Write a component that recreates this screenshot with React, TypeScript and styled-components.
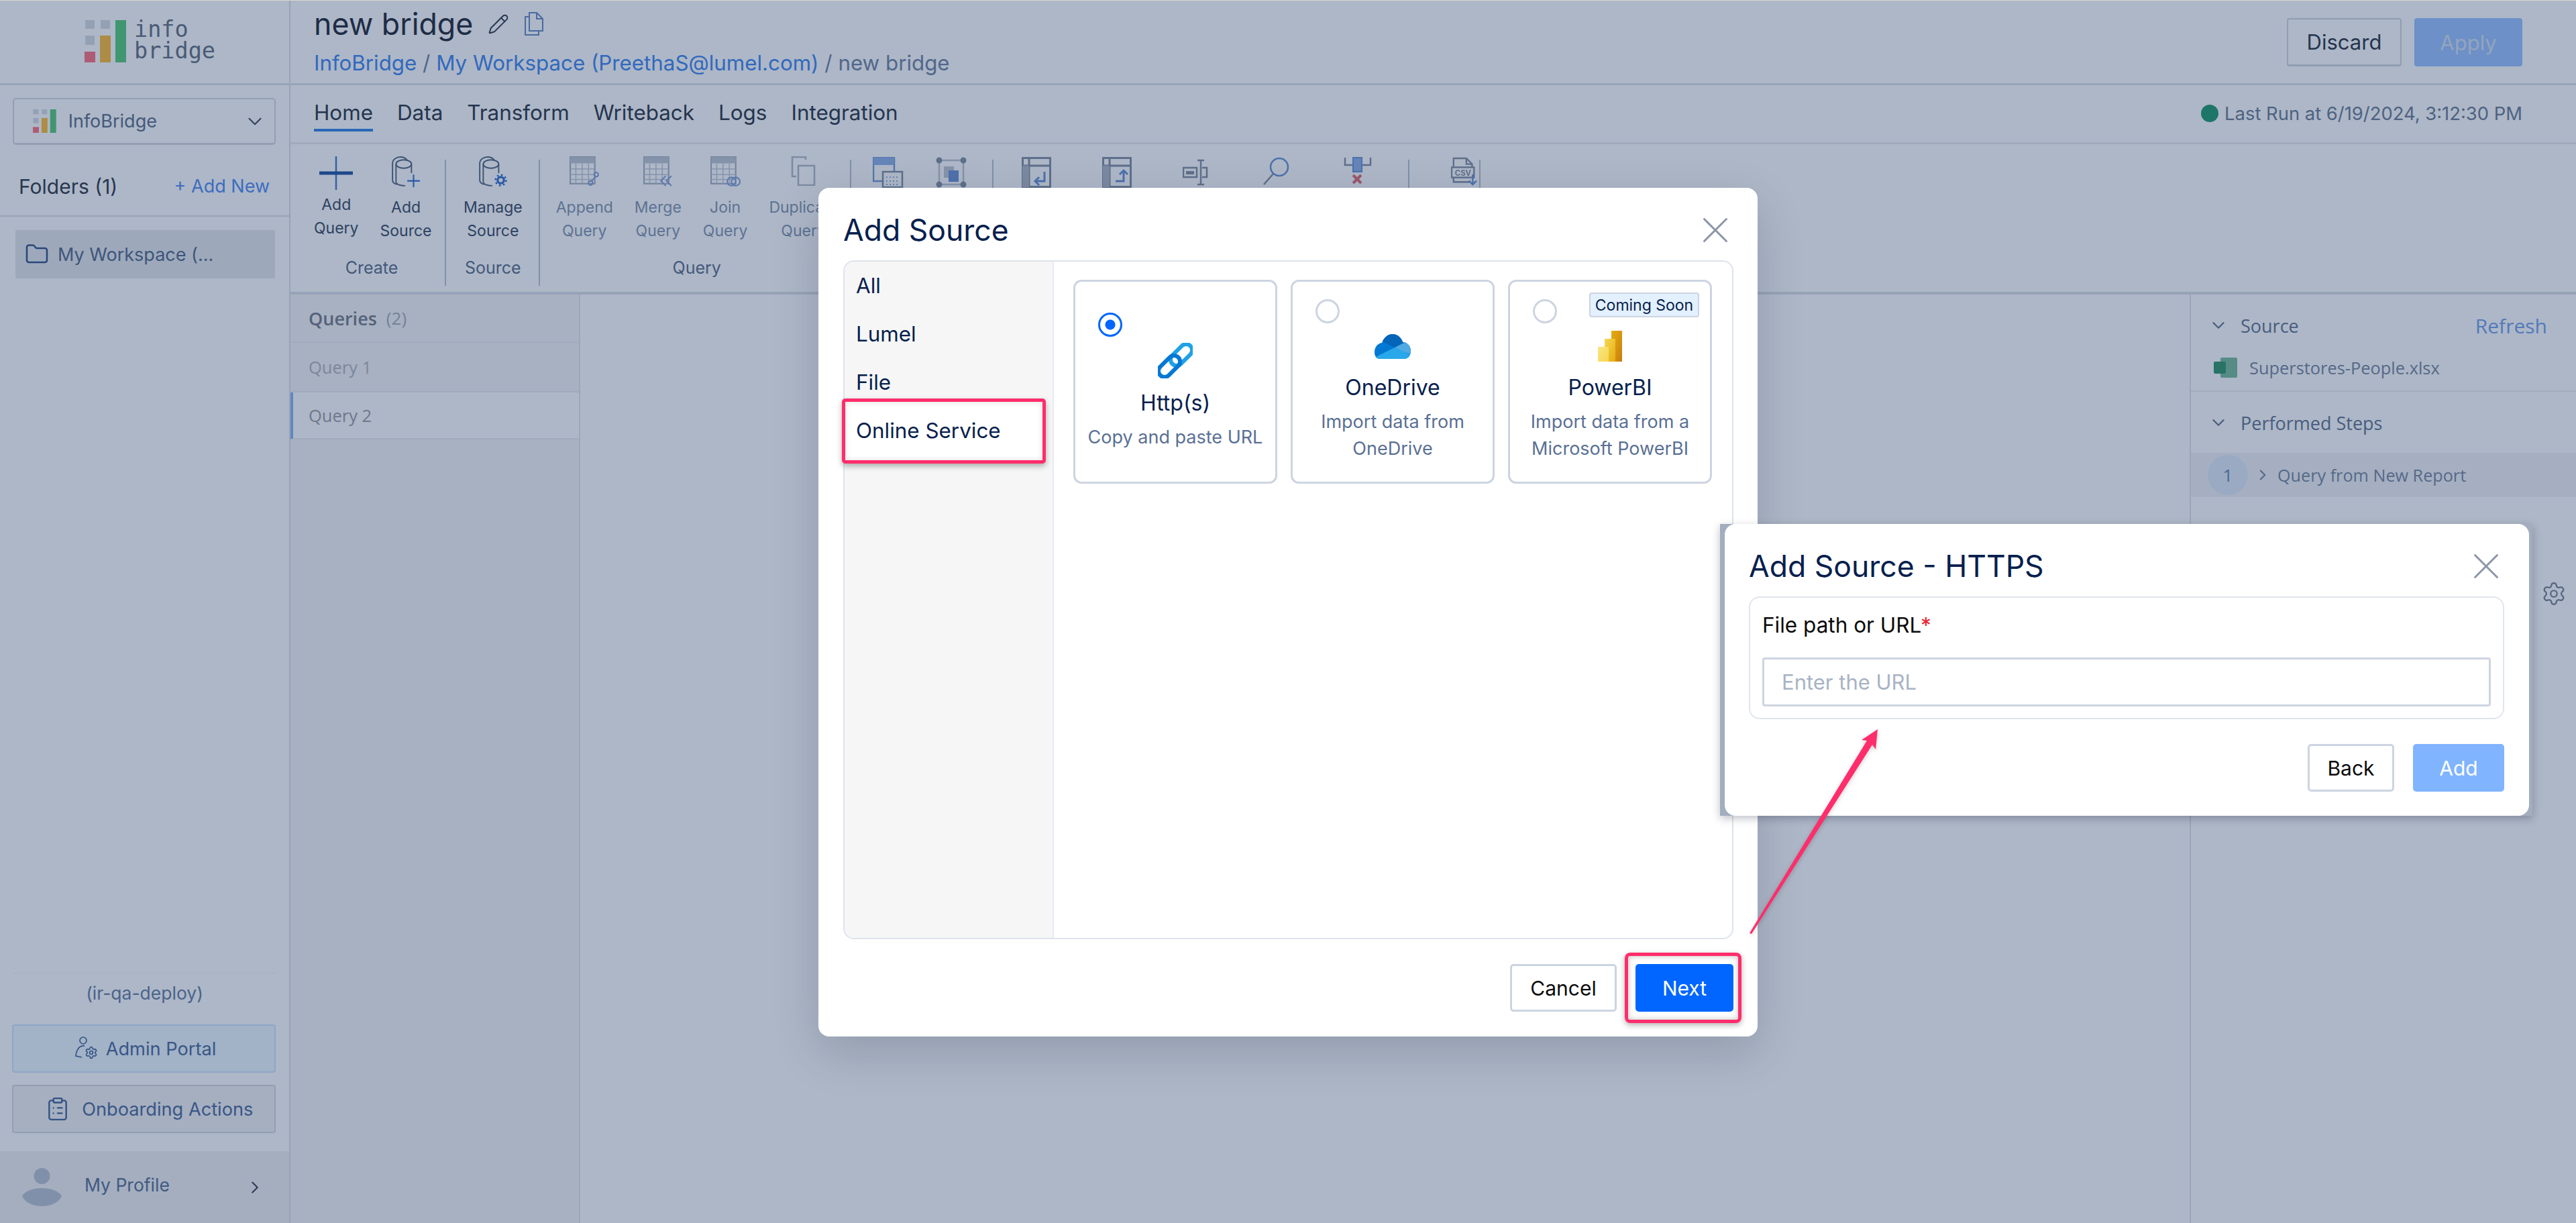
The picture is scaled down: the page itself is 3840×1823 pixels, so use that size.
import React from "react";
import styled, { createGlobalStyle } from "styled-components";
import { ChevronDown, ChevronRight, ClipboardList, Folder, Pencil, Settings, X } from "lucide-react";

const Global = createGlobalStyle`
  html, body { margin: 0; padding: 0; background: #fff; }
  body { font-family: Inter, "Liberation Sans", sans-serif; overflow: hidden; }
  * { box-sizing: border-box; }
`;

const Page = styled.div`
  position: relative;
  width: 3840px;
  height: 1823px;
  overflow: hidden;
  display: grid;
  grid-template-columns: 433px 1fr;
  background: #fff;
`;

/* ---------- sidebar ---------- */
const Sidebar = styled.aside`
  display: flex;
  flex-direction: column;
  border-right: 2px solid #dfe2e7;
  height: 1823px;
`;
const LogoRow = styled.div`
  height: 127px;
  border-bottom: 3px solid #dfe2e7;
  display: flex;
  align-items: flex-start;
  padding: 30px 0 0 126px;
  gap: 12px;
`;
const LogoText = styled.div`
  font-family: "DejaVu Sans Mono", monospace;
  font-size: 33.5px;
  line-height: 32px;
  color: #6d7686;
  margin-top: -2px;
`;
const SelectBox = styled.div`
  margin: 19px 20px 0 19px;
  height: 70px;
  border: 2px solid #d8dce4;
  border-bottom-width: 3px;
  border-radius: 5px;
  display: flex;
  align-items: center;
  padding: 0 12px 0 28px;
  gap: 18px;
  color: #66758f;
  font-size: 27px;
  svg:last-child { margin-left: auto; color: #4b5568; }
`;
const FolderHead = styled.div`
  height: 107px;
  border-bottom: 2px solid #dfe2e7;
  display: flex;
  align-items: center;
  justify-content: space-between;
  padding: 18px 29px 0 28px;
`;
const FolderTitle = styled.span`
  font-size: 30px;
  color: #3b4350;
`;
const AddNew = styled.span`
  font-size: 27px;
  color: #5a93f4;
`;
const FolderItem = styled.div`
  margin: 20px 21px 0 23px;
  height: 72px;
  background: #e8eaee;
  display: flex;
  align-items: center;
  padding-left: 14px;
  gap: 13px;
  font-size: 27px;
  color: #5d6f8f;
  svg { color: #3f5a8c; }
`;
const SideFill = styled.div`
  flex: 1;
`;
const Tenant = styled.div`
  border-top: 1px solid #f3f4f6;
  margin: 0 18px;
  text-align: center;
  font-size: 26.5px;
  height: 77px;
  line-height: 58px;
  color: #6f83a6;
`;
const SideButton = styled.div<{ $tone: "blue" | "grey" }>`
  margin: 0 20px 18px 18px;
  height: 72px;
  border-radius: 4px;
  border: 2px solid ${p => (p.$tone === "blue" ? "#d1e6ff" : "#d8dae0")};
  background: ${p => (p.$tone === "blue" ? "#eff8ff" : "#f4f3f5")};
  display: flex;
  align-items: center;
  justify-content: center;
  gap: 10px;
  padding-left: ${p => (p.$tone === "blue" ? 5 : 15)}px;
  font-size: 27.2px;
  color: #54719f;
  svg { color: #4a6a9c; }
`;
const ProfileRow = styled.div`
  margin-top: 9px;
  height: 107px;
  background: #f3f2f2;
  display: flex;
  align-items: center;
  padding: 0 36px 0 33px;
  font-size: 26.5px;
  color: #5f769b;
  gap: 34px;
  span { margin-top: -8px; }
  svg:last-child { margin-left: auto; color: #3d4656; }
`;

/* ---------- top ---------- */
const Main = styled.main`
  display: flex;
  flex-direction: column;
  min-width: 0;
  height: 1823px;
`;
const TopBar = styled.header`
  height: 127px;
  border-bottom: 3px solid #dfe2e7;
  display: flex;
  align-items: flex-start;
  justify-content: space-between;
  padding: 0 80px 0 35px;
`;
const TitleRow = styled.div`
  display: flex;
  align-items: center;
  gap: 22px;
  height: 72px;
  color: #3d4350;
`;
const Title = styled.h1`
  margin: 0;
  font-weight: 400;
  font-size: 44.7px;
  color: #2e3340;
`;
const Crumb = styled.div`
  font-size: 31.3px;
  line-height: 44px;
  margin-top: 0;
  color: #7a8aa6;
`;
const CrumbLink = styled.span`
  color: #4a8cf0;
`;
const TopActions = styled.div`
  display: flex;
  gap: 19px;
  padding-top: 27px;
`;
const Ghost = styled.div`
  width: 171px;
  height: 72px;
  border: 2px solid #d5d9e0;
  border-bottom-width: 3px;
  border-radius: 4px;
  display: flex;
  align-items: center;
  justify-content: center;
  font-size: 31px;
  color: #37404d;
`;
const Primary = styled.div`
  width: 161px;
  height: 72px;
  background: #9fc6ff;
  border-radius: 4px;
  display: flex;
  align-items: center;
  justify-content: center;
  font-size: 31px;
  color: #dbe4f2;
`;
const TabsRow = styled.nav`
  height: 88px;
  border-bottom: 3px solid #eceef1;
  display: flex;
  align-items: stretch;
  padding-left: 35px;
  gap: 36px;
`;
const Tab = styled.div<{ $on?: boolean }>`
  font-size: 31.4px;
  color: #37404d;
  height: 69px;
  line-height: 46px;
  padding-top: 18px;
  border-bottom: ${p => (p.$on ? "4px solid #3d8ae8" : "4px solid transparent")};
`;
const RunInfo = styled.div`
  margin-left: auto;
  margin-right: 80px;
  display: flex;
  align-items: center;
  gap: 9px;
  font-size: 27.4px;
  height: 84px;
  color: #748299;
`;
const Dot = styled.i`
  width: 26px;
  height: 26px;
  border-radius: 50%;
  background: #2c9f74;
`;

/* ---------- ribbon ---------- */
const Ribbon = styled.section`
  height: 224px;
  border-bottom: 4px solid #dfe2e7;
  display: flex;
  align-items: stretch;
`;
const RGroup = styled.div<{ $pad: number; $gap: number; $end?: number; $w?: number }>`
  position: relative;
  display: flex;
  flex-direction: column;
  ${p => (p.$w ? `width: ${p.$w}px;` : "")}
  padding: 15px ${p => p.$end ?? 0}px 0 ${p => p.$pad}px;
  &::after {
    content: "";
    position: absolute;
    right: 0;
    top: 23px;
    bottom: 9px;
    width: 2px;
    background: #bfc6d2;
  }
  > div:first-child { gap: ${p => p.$gap}px; }
`;
const RItems = styled.div`
  display: flex;
  flex: 1;
`;
const RButton = styled.div<{ $off?: boolean }>`
  display: flex;
  flex-direction: column;
  align-items: center;
  font-size: 23px;
  line-height: 35px;
  text-align: center;
  color: ${p => (p.$off ? "#8b9ab3" : "#45526a")};
`;
const RIcon = styled.div<{ $h: number }>`
  height: ${p => p.$h}px;
  padding-top: 3px;
  display: flex;
  align-items: flex-start;
  justify-content: center;
`;
const RLabel = styled.div`
  font-size: 25px;
  line-height: 36px;
  padding-bottom: 18px;
  text-align: center;
  color: #65748e;
`;
const IconCell = styled.div`
  width: 44px;
  padding-top: 4px;
  opacity: 0.8;
`;

/* ---------- workspace ---------- */
const Workspace = styled.div`
  flex: 1;
  display: flex;
  min-height: 0;
`;
const Queries = styled.div`
  width: 432px;
  border-right: 2px solid #e6e8ec;
  background: #f6f6f7;
  font-family: "Open Sans", Inter, sans-serif;
`;
const QHead = styled.div`
  height: 72px;
  border-bottom: 2px solid #ecedf0;
  display: flex;
  align-items: center;
  gap: 14px;
  padding-left: 27px;
  font-size: 27px;
  font-weight: 600;
  color: #7e828c;
  span { font-weight: 400; font-size: 26px; color: #aeb1b8; }
`;
const QRow = styled.div<{ $on?: boolean; $h: number }>`
  height: ${p => p.$h}px;
  border-bottom: 2px solid #ecedf0;
  display: flex;
  align-items: center;
  padding-left: ${p => (p.$on ? 23 : 27)}px;
  font-size: 25.5px;
  color: ${p => (p.$on ? "#a2a2a8" : "#b8b8be")};
  border-left: ${p => (p.$on ? "4px solid #8fb8f5" : "0")};
  background: ${p => (p.$on ? "#fff" : "transparent")};
`;
const Canvas = styled.div`
  flex: 1;
`;
const Side = styled.div`
  width: 576px;
  border-left: 2px solid #e3e5ea;
  font-size: 26px;
  color: #6b7a94;
  position: relative;
  font-family: "Open Sans", Inter, sans-serif;
`;
const SideHead = styled.div`
  height: 82px;
  display: flex;
  align-items: center;
  padding: 10px 43px 0 26px;
  gap: 18px;
  font-size: 27px;
  font-weight: 500;
  b { font-weight: 400; margin-left: auto; color: #7aa5ec; font-size: 30px; }
`;
const SideFile = styled.div`
  height: 63px;
  display: flex;
  align-items: center;
  gap: 17px;
  padding: 0 0 7px 34px;
  border-bottom: 2px solid #eceef1;
  font-size: 25.4px;
  color: #7f8ca3;
`;
const StepRow = styled.div`
  height: 66px;
  margin-top: 9px;
  background: #f3f4f6;
  display: flex;
  align-items: center;
  padding-left: 25px;
  gap: 9px;
  font-size: 25.2px;
  color: #7f8ca3;
`;
const StepNo = styled.span`
  width: 60px;
  height: 60px;
  border-radius: 50%;
  background: #e3ecfa;
  display: flex;
  align-items: center;
  justify-content: center;
  color: #6d86ad;
`;
const GearSpot = styled.div`
  position: absolute;
  right: 14px;
  top: 427px;
  color: #7c879a;
`;

/* ---------- overlay ---------- */
const Scrim = styled.div`
  position: absolute;
  inset: 0;
  background: rgba(0, 30, 80, 0.32);
`;
const TopHair = styled.div`
  position: absolute;
  inset: 0 0 auto 0;
  height: 1px;
  background: #d8d8d2;
`;
const Dialog = styled.div`
  position: absolute;
  left: 1220px;
  top: 280px;
  width: 1400px;
  height: 1265px;
  background: #fff;
  border-radius: 16px;
  box-shadow: 0 24px 70px rgba(0, 10, 40, 0.16);
  display: flex;
  flex-direction: column;
  padding: 0 36px 0 37px;
`;
const DialogHead = styled.div`
  height: 108px;
  display: flex;
  align-items: center;
  justify-content: space-between;
  padding: 18px 0 0 0;
  svg { color: #8d97a8; margin-right: -6px; }
`;
const DialogTitle = styled.h2`
  margin: 0;
  font-weight: 400;
  font-size: 44.5px;
  color: #06204d;
`;
const Frame = styled.div`
  height: 1012px;
  border: 2px solid #dde3ec;
  border-radius: 16px;
  display: flex;
  overflow: visible;
`;
const Nav = styled.div`
  width: 312px;
  background: #f6f6f6;
  border-right: 2px solid #e6eaf0;
  border-radius: 14px 0 0 14px;
`;
const NavItem = styled.div<{ $mark?: boolean }>`
  position: relative;
  height: 72px;
  display: flex;
  align-items: center;
  padding-left: 17px;
  font-size: 31.4px;
  color: #06204d;
  span { position: relative; z-index: 1; }
  ${p =>
    p.$mark &&
    `&::before {
      content: "";
      position: absolute;
      left: -4px; right: 10px; top: -12px; bottom: -13px;
      background: #fff;
      border: 5px solid #ff2d6b;
      border-radius: 5px;
      box-shadow: 0 4px 8px rgba(0,0,0,.3), inset 0 0 10px rgba(0,0,0,.12);
    }`}
`;
const Cards = styled.div`
  flex: 1;
  display: flex;
  gap: 20px;
  padding: 27px 0 0 29px;
  align-items: flex-start;
`;
const Card = styled.div<{ $top: number }>`
  position: relative;
  width: 304px;
  height: 304px;
  border: 3px solid #cdd4e1;
  border-radius: 12px;
  display: flex;
  flex-direction: column;
  align-items: center;
  padding-top: ${p => p.$top}px;
`;
const Radio = styled.i<{ $on?: boolean; $y: number; $x: number }>`
  position: absolute;
  left: ${p => p.$x}px;
  top: ${p => p.$y}px;
  width: 36px;
  height: 36px;
  border-radius: 50%;
  border: 3px solid ${p => (p.$on ? "#0066ff" : "#cdd4e1")};
  background: ${p => (p.$on ? "radial-gradient(circle, #0066ff 0 7px, #fff 8px)" : "#fff")};
`;
const Badge = styled.span`
  position: absolute;
  right: 16px;
  top: 16px;
  width: 164px;
  height: 37px;
  border: 2px solid #cdd4e1;
  border-radius: 4px;
  background: #e3f0ff;
  display: flex;
  align-items: center;
  justify-content: center;
  font-size: 23px;
  color: #06204d;
`;
const CardIcon = styled.div<{ $h: number }>`
  height: ${p => p.$h}px;
  display: flex;
  align-items: center;
  justify-content: center;
`;
const CardTitle = styled.div`
  margin-top: 16px;
  font-size: 32px;
  line-height: 42px;
  color: #06204d;
`;
const CardText = styled.div`
  margin-top: 10px;
  font-size: 27px;
  line-height: 40px;
  text-align: center;
  color: #5a7094;
`;
const Footer = styled.div`
  display: flex;
  justify-content: flex-end;
  gap: 28px;
  padding-top: 37px;
`;
const Outline = styled.div<{ $w: number }>`
  width: ${p => p.$w}px;
  height: 71px;
  border: 3px solid #cdd4e1;
  border-radius: 5px;
  display: flex;
  align-items: center;
  justify-content: center;
  font-size: 30px;
  color: #0b0b0b;
`;
const Filled = styled.div<{ $w: number; $bg: string }>`
  position: relative;
  width: ${p => p.$w}px;
  height: 71px;
  background: ${p => p.$bg};
  border-radius: 5px;
  display: flex;
  align-items: center;
  justify-content: center;
  font-size: 30px;
  color: #fff;
`;
const Mark = styled.i`
  position: absolute;
  inset: -17px -12px -17px -16px;
  border: 5px solid #ff2d6b;
  border-radius: 8px;
  box-shadow: 0 3px 8px rgba(0, 0, 0, 0.3), inset 0 0 8px rgba(0, 0, 0, 0.25);
`;

const Snap = styled.div`
  position: absolute;
  left: 2564px;
  top: 781px;
  width: 1211px;
  height: 435px;
  background: #a3adbe;
  box-shadow: 0 4px 12px rgba(0, 10, 40, 0.25);
  padding-left: 7px;
  padding-right: 5px;
`;
const SnapBody = styled.div`
  height: 100%;
  background: #fff;
  border-radius: 16px;
  padding: 0 37px 0 36px;
  display: flex;
  flex-direction: column;
`;
const SnapFrame = styled.div`
  height: 183px;
  border: 2px solid #e0e5ee;
  border-radius: 16px;
  padding: 0 18px;
`;
const FieldLabel = styled.label`
  display: block;
  height: 89px;
  line-height: 82px;
  font-size: 31.5px;
  color: #0b0b0b;
  em { color: #e8202a; font-style: normal; }
`;
const UrlInput = styled.input`
  display: block;
  width: 100%;
  height: 73px;
  border: 3px solid #cdd4e1;
  border-radius: 4px;
  padding: 0 26px;
  font-family: inherit;
  font-size: 31px;
  background: #fff;
  &::placeholder { color: #a8b3c4; }
`;
const Arrow = styled.svg`
  position: absolute;
  left: 2600px;
  top: 1080px;
  filter: drop-shadow(0 2px 3px rgba(0, 0, 0, 0.2));
`;

/* ---------- drawings ---------- */
const Bars = ({ s }: { s: number }) => (
  <svg width={62 * s} height={63 * s} viewBox="0 0 62 63">
    <rect x="1" y="0" width="14" height="13" fill="#dadde3" />
    <rect x="24" y="0" width="14" height="13" fill="#dadde3" />
    <rect x="1" y="23" width="14" height="14" fill="#dadde3" />
    <rect x="0" y="47" width="16" height="16" fill="#ff7a85" />
    <rect x="23" y="23" width="16" height="40" fill="#ffc040" />
    <rect x="46" y="0" width="16" height="63" fill="#5fcf80" />
  </svg>
);
const Cylinders = ({ children }: { children: React.ReactNode }) => (
  <svg width="46" height="46" viewBox="0 0 42 44" fill="none" stroke="#5a6a84" strokeWidth="1.8">
    <path d="M2 34V10C2 4 8 1 13 1C17 1 21 2 23 6M2 34C2 37 4 39 8 40" />
    <ellipse cx="18" cy="11" rx="11" ry="6" />
    <path d="M7 11V36C7 40 13 42 20 42M29 11V24" />
    {children}
  </svg>
);
const AddSourceIcon = () => (
  <Cylinders><path d="M32 26V44M23 35H41" stroke="#3f74d0" strokeWidth="2" /></Cylinders>
);
const ManageIcon = () => (
  <Cylinders>
    <circle cx="32" cy="34" r="4.5" stroke="#3f74d0" strokeWidth="3" />
    <circle cx="32" cy="34" r="7.5" stroke="#3f74d0" strokeWidth="2.5" strokeDasharray="2.5 3.4" />
  </Cylinders>
);
const TableIcon = ({ mark }: { mark: React.ReactNode }) => (
  <svg width="46" height="46" viewBox="0 0 42 44">
    <rect x="1" y="1" width="35" height="38" fill="none" stroke="#a8b1c2" strokeWidth="2" />
    <rect x="1" y="1" width="35" height="9" fill="#c3c9d5" />
    <path d="M1 18h35M1 26h35M1 33h35M9 10v29M18 10v29M27 10v29" stroke="#c6ccd7" strokeWidth="1.5" />
    {mark}
  </svg>
);
const DupIcon = () => (
  <svg width="38" height="44" viewBox="0 0 38 44" fill="none" stroke="#b6bdca" strokeWidth="2.5">
    <path d="M22 5V1H2v29h6" />
    <rect x="11" y="14" width="24" height="29" />
  </svg>
);
const PlusIcon = () => (
  <svg width="50" height="50" viewBox="0 0 50 50">
    <path d="M25 0v50" stroke="#4f7fd0" strokeWidth="2.5" />
    <path d="M0 25h50" stroke="#2b5ea8" strokeWidth="5" />
  </svg>
);
const Swap = () => (
  <svg width="46" height="46" viewBox="0 0 46 46" fill="none">
    <rect x="1" y="1" width="31" height="35" stroke="#5c86cc" strokeWidth="2.5" />
    <rect x="1" y="1" width="31" height="11" fill="#7da4e6" />
    <rect x="15" y="22" width="29" height="23" fill="#fff" stroke="#6f7c92" strokeWidth="2.5" />
    <path d="M20 30h20M20 36h20M20 41h20" stroke="#7da4e6" strokeWidth="2" strokeDasharray="2 3" />
  </svg>
);
const Crop = () => (
  <svg width="46" height="46" viewBox="0 0 46 46">
    <rect x="5" y="5" width="36" height="36" fill="none" stroke="#b6bdca" strokeWidth="2.5" />
    <circle cx="5" cy="5" r="4.5" fill="#6f7c92" />
    <circle cx="41" cy="5" r="4.5" fill="#6f7c92" />
    <circle cx="5" cy="41" r="4.5" fill="#6f7c92" />
    <circle cx="41" cy="41" r="4.5" fill="#6f7c92" />
    <rect x="12" y="14" width="15" height="17" fill="#b6bdca" />
    <rect x="19" y="20" width="15" height="17" fill="#4f7fd0" />
  </svg>
);
const Pane = ({ d }: { d: string }) => (
  <svg width="44" height="46" viewBox="0 0 44 46" fill="none">
    <rect x="1.5" y="1.5" width="41" height="43" stroke="#6f7c92" strokeWidth="3" />
    <path d="M1 13h42M11 1v44" stroke="#6f7c92" strokeWidth="3" />
    <rect x="1" y="13" width="10" height="32" fill="#a4acba" />
    <path d={d} stroke="#4f7fd0" strokeWidth="3" />
  </svg>
);
const Rename = () => (
  <svg width="38" height="46" viewBox="0 0 38 46" fill="none" stroke="#6f7c92" strokeWidth="2.5">
    <rect x="1" y="16" width="20" height="14" />
    <rect x="5" y="21" width="12" height="5" fill="#6f7c92" stroke="none" />
    <path d="M22 5h10M27 5v36M22 41h10M29 16h7v14h-7" />
  </svg>
);
const Lens = () => (
  <svg width="40" height="44" viewBox="0 0 40 44" fill="none">
    <circle cx="24" cy="15" r="13" stroke="#4f7fd0" strokeWidth="2.5" />
    <path d="M15 25L1 41" stroke="#6f7c92" strokeWidth="2.5" />
  </svg>
);
const DropColumn = () => (
  <svg width="42" height="42" viewBox="0 0 42 42" fill="none">
    <path d="M2 1V12H13M40 1V12H28" stroke="#6f7c92" strokeWidth="2.5" />
    <rect x="14" y="1" width="13" height="21" fill="#7da4e6" stroke="#4f7fd0" strokeWidth="2" />
    <path d="M14 27L26 39M26 27L14 39" stroke="#e0505f" strokeWidth="4" />
  </svg>
);
const CsvIcon = () => (
  <svg width="40" height="44" viewBox="0 0 42 46" fill="none">
    <path d="M4 16V2H24L33 11V16M4 32V39H30" stroke="#6f7c92" strokeWidth="2.5" />
    <path d="M24 2V11H33" stroke="#6f7c92" strokeWidth="2.5" />
    <rect x="1" y="16" width="35" height="16" stroke="#6f7c92" strokeWidth="2.5" />
    <text x="6" y="29" fontFamily="Inter, sans-serif" fontSize="12" fontWeight="700" fill="#6f7c92">CSV</text>
    <path d="M34 27V43M28 37L34 43L40 37" stroke="#4f7fd0" strokeWidth="2.5" />
  </svg>
);
const DocCopy = () => (
  <svg width="30" height="36" viewBox="0 0 30 36" fill="none" stroke="#6f8ec8" strokeWidth="2">
    <path d="M8 1H19L28 10V28H8Z" />
    <path d="M19 1V10H28" />
    <path d="M8 7H2V34H22V28" />
  </svg>
);
const LinkIcon = () => (
  <svg width="52" height="53" viewBox="0 0 52 53" fill="none" strokeWidth="6">
    <rect x="-9" y="-19" width="18" height="38" rx="9" transform="translate(35 18) rotate(45)" stroke="#1fa2e5" />
    <rect x="-9" y="-19" width="18" height="38" rx="9" transform="translate(17 35) rotate(45)" stroke="#0478d4" />
  </svg>
);
const OneDriveIcon = () => (
  <svg width="54" height="37" viewBox="0 0 54 37">
    <defs>
      <clipPath id="odc">
        <path d="M8 37C3 37 0 33 0 27C0 20 4 14 11 13C14 5 20 0 27 0C34 0 40 5 42 12C49 12 54 18 54 25C54 32 50 37 44 37Z" />
      </clipPath>
    </defs>
    <g clipPath="url(#odc)">
      <rect width="54" height="37" fill="#0078d4" />
      <path d="M10 10L30 20L44 13L40 0H14Z" fill="#0364b8" />
      <path d="M30 20L44 13L54 15V30L42 26Z" fill="#50a9e2" />
      <path d="M0 35L30 20L54 31V37H0Z" fill="#28a8ea" />
    </g>
  </svg>
);
const PbiIcon = () => (
  <svg width="36" height="46" viewBox="0 0 36 46">
    <defs>
      <linearGradient id="p1" x1="0" x2="1" y1="0" y2="1"><stop stopColor="#e6ad10" /><stop offset="1" stopColor="#c87e0e" /></linearGradient>
      <linearGradient id="p2" x1="0" x2="1" y1="0" y2="1"><stop stopColor="#f6d751" /><stop offset="1" stopColor="#e6ad10" /></linearGradient>
      <linearGradient id="p3" x1="0" x2="1" y1="0" y2="1"><stop stopColor="#f9e583" /><stop offset="1" stopColor="#f6d751" /></linearGradient>
    </defs>
    <rect x="20" y="0" width="16" height="46" fill="url(#p1)" />
    <rect x="10" y="12" width="16" height="34" fill="url(#p2)" />
    <rect x="0" y="24" width="16" height="22" fill="url(#p3)" />
  </svg>
);
const AdminIcon = () => (
  <svg width="36" height="36" viewBox="0 0 36 36" fill="none" stroke="currentColor" strokeWidth="1.6">
    <circle cx="12" cy="6" r="5" />
    <path d="M14 14c-7-1-12 5-13 15l9 2" />
    <Settings x="14" y="14" width="20" height="20" strokeWidth="2" />
  </svg>
);
const Avatar = () => (
  <svg width="59" height="57" viewBox="0 0 59 57" fill="#bfc6d4">
    <ellipse cx="29.5" cy="12" rx="12" ry="12" />
    <path d="M0 42C8 26 51 26 59 42C50 62 9 62 0 42Z" />
  </svg>
);
const Sheet = () => (
  <svg width="36" height="32" viewBox="0 0 36 32">
    <rect x="10" y="1" width="25" height="30" rx="2" fill="#7fbfa0" />
    <rect x="0" y="7" width="18" height="18" rx="2" fill="#3d9a70" />
  </svg>
);

export default function App() {
  return (
    <Page>
      <Global />
      <Sidebar>
        <LogoRow>
          <Bars s={1} />
          <LogoText>info<br />bridge</LogoText>
        </LogoRow>
        <SelectBox>
          <Bars s={0.56} />
          InfoBridge
          <ChevronDown size={34} strokeWidth={1.5} />
        </SelectBox>
        <FolderHead>
          <FolderTitle>Folders (1)</FolderTitle>
          <AddNew>+ Add New</AddNew>
        </FolderHead>
        <FolderItem>
          <Folder size={36} strokeWidth={1.7} />
          My Workspace (...
        </FolderItem>
        <SideFill />
        <Tenant>(ir-qa-deploy)</Tenant>
        <SideButton $tone="blue"><AdminIcon />Admin Portal</SideButton>
        <SideButton $tone="grey"><ClipboardList size={38} strokeWidth={1.5} />&nbsp;Onboarding Actions</SideButton>
        <ProfileRow>
          <Avatar />
          <span>My Profile</span>
          <ChevronRight size={30} strokeWidth={1.6} />
        </ProfileRow>
      </Sidebar>
      <Main>
        <TopBar>
          <div>
            <TitleRow>
              <Title>new bridge</Title>
              <Pencil size={32} strokeWidth={1.5} />
              <DocCopy />
            </TitleRow>
            <Crumb>
              <CrumbLink>InfoBridge</CrumbLink> / <CrumbLink>My Workspace (PreethaS@lumel.com)</CrumbLink> / new bridge
            </Crumb>
          </div>
          <TopActions>
            <Ghost>Discard</Ghost>
            <Primary>Apply</Primary>
          </TopActions>
        </TopBar>
        <TabsRow>
          <Tab $on>Home</Tab>
          <Tab>Data</Tab>
          <Tab>Transform</Tab>
          <Tab>Writeback</Tab>
          <Tab>Logs</Tab>
          <Tab>Integration</Tab>
          <RunInfo><Dot />Last Run at 6/19/2024, 3:12:30 PM</RunInfo>
        </TabsRow>
        <Ribbon>
          <RGroup $pad={35} $gap={32} $end={25} $w={232}>
            <RItems>
              <RButton><RIcon $h={58}><PlusIcon /></RIcon>Add<br />Query</RButton>
              <RButton><RIcon $h={62}><AddSourceIcon /></RIcon>Add<br />Source</RButton>
            </RItems>
            <RLabel>Create</RLabel>
          </RGroup>
          <RGroup $pad={26} $gap={0} $end={26}>
            <RItems>
              <RButton><RIcon $h={62}><ManageIcon /></RIcon>Manage<br />Source</RButton>
            </RItems>
            <RLabel>Source</RLabel>
          </RGroup>
          <RGroup $pad={24} $gap={32} $end={20}>
            <RItems>
              <RButton $off><RIcon $h={62}><TableIcon mark={<g fill="none" stroke="#8aa5d8" strokeWidth="2"><circle cx="38" cy="26" r="3" /><circle cx="30" cy="38" r="3" /><path d="M37 29l-6 7" /></g>} /></RIcon>Append<br />Query</RButton>
              <RButton $off><RIcon $h={62}><TableIcon mark={<path d="M40 28l-7 7 7 7M32 28l-7 7 7 7" fill="none" stroke="#8aa5d8" strokeWidth="2" />} /></RIcon>Merge<br />Query</RButton>
              <RButton $off><RIcon $h={62}><TableIcon mark={<g fill="none" stroke="#8aa5d8" strokeWidth="2"><circle cx="30" cy="36" r="6" /><circle cx="36" cy="36" r="6" /></g>} /></RIcon>Join<br />Query</RButton>
              <RButton $off><RIcon $h={62}><DupIcon /></RIcon>Duplicate<br />Query</RButton>
            </RItems>
            <RLabel>Query</RLabel>
          </RGroup>
          <RGroup $pad={32} $gap={50} $end={42}>
            <RItems>
              <IconCell><Swap /></IconCell>
              <IconCell><Crop /></IconCell>
            </RItems>
          </RGroup>
          <RGroup $pad={42} $gap={76} $end={54}>
            <RItems>
              <IconCell><Pane d="M34 22v14H20M26 30l-6 6 6 6" /></IconCell>
              <IconCell><Pane d="M20 36h12V20M26 26l6-6 6 6" /></IconCell>
              <IconCell><Rename /></IconCell>
              <IconCell><Lens /></IconCell>
              <IconCell><DropColumn /></IconCell>
            </RItems>
          </RGroup>
          <RGroup $pad={62} $gap={0}>
            <RItems>
              <IconCell><CsvIcon /></IconCell>
            </RItems>
          </RGroup>
        </Ribbon>
        <Workspace>
          <Queries>
            <QHead>Queries <span>(2)</span></QHead>
            <QRow $h={74}>Query 1</QRow>
            <QRow $h={70} $on>Query 2</QRow>
          </Queries>
          <Canvas />
          <Side>
            <SideHead><ChevronDown size={30} strokeWidth={1.8} />Source<b>Refresh</b></SideHead>
            <SideFile><Sheet />Superstores-People.xlsx</SideFile>
            <SideHead><ChevronDown size={30} strokeWidth={1.8} />Performed Steps</SideHead>
            <StepRow><StepNo>1</StepNo><ChevronRight size={26} />Query from New Report</StepRow>
            <GearSpot><Settings size={38} strokeWidth={1.4} /></GearSpot>
          </Side>
        </Workspace>
      </Main>
      <Scrim />
      <TopHair />
      <Dialog>
        <DialogHead>
          <DialogTitle>Add Source</DialogTitle>
          <X size={66} strokeWidth={1.1} />
        </DialogHead>
        <Frame>
          <Nav>
            <NavItem><span>All</span></NavItem>
            <NavItem><span>Lumel</span></NavItem>
            <NavItem><span>File</span></NavItem>
            <NavItem $mark><span>Online Service</span></NavItem>
          </Nav>
          <Cards>
            <Card $top={91}>
              <Radio $on $x={34} $y={46} />
              <CardIcon $h={53}><LinkIcon /></CardIcon>
              <CardTitle>Http(s)</CardTitle>
              <CardText>Copy and paste URL</CardText>
            </Card>
            <Card $top={71}>
              <Radio $x={34} $y={26} />
              <CardIcon $h={50}><OneDriveIcon /></CardIcon>
              <CardTitle>OneDrive</CardTitle>
              <CardText>Import data from<br />OneDrive</CardText>
            </Card>
            <Card $top={71}>
              <Radio $x={34} $y={26} />
              <Badge>Coming Soon</Badge>
              <CardIcon $h={50}><PbiIcon /></CardIcon>
              <CardTitle>PowerBI</CardTitle>
              <CardText>Import data from a<br />Microsoft PowerBI</CardText>
            </Card>
          </Cards>
        </Frame>
        <Footer>
          <Outline $w={159}>Cancel</Outline>
          <Filled $w={146} $bg="#0066ff">Next<Mark /></Filled>
        </Footer>
      </Dialog>
      <Snap>
        <SnapBody>
          <DialogHead>
            <DialogTitle>Add Source - HTTPS</DialogTitle>
            <X size={66} strokeWidth={1.1} />
          </DialogHead>
          <SnapFrame>
            <FieldLabel>File path or URL<em>*</em></FieldLabel>
            <UrlInput placeholder="Enter the URL" />
          </SnapFrame>
          <Footer>
            <Outline $w={129}>Back</Outline>
            <Filled $w={136} $bg="#80b4ff">Add</Filled>
          </Footer>
        </SnapBody>
      </Snap>
      <Arrow width="210" height="320" viewBox="0 0 210 320">
        <path d="M8 311L183 24L175 23L199 7L196 37L191 30L11 312Z" fill="#ff2d6b" />
      </Arrow>
    </Page>
  );
}
